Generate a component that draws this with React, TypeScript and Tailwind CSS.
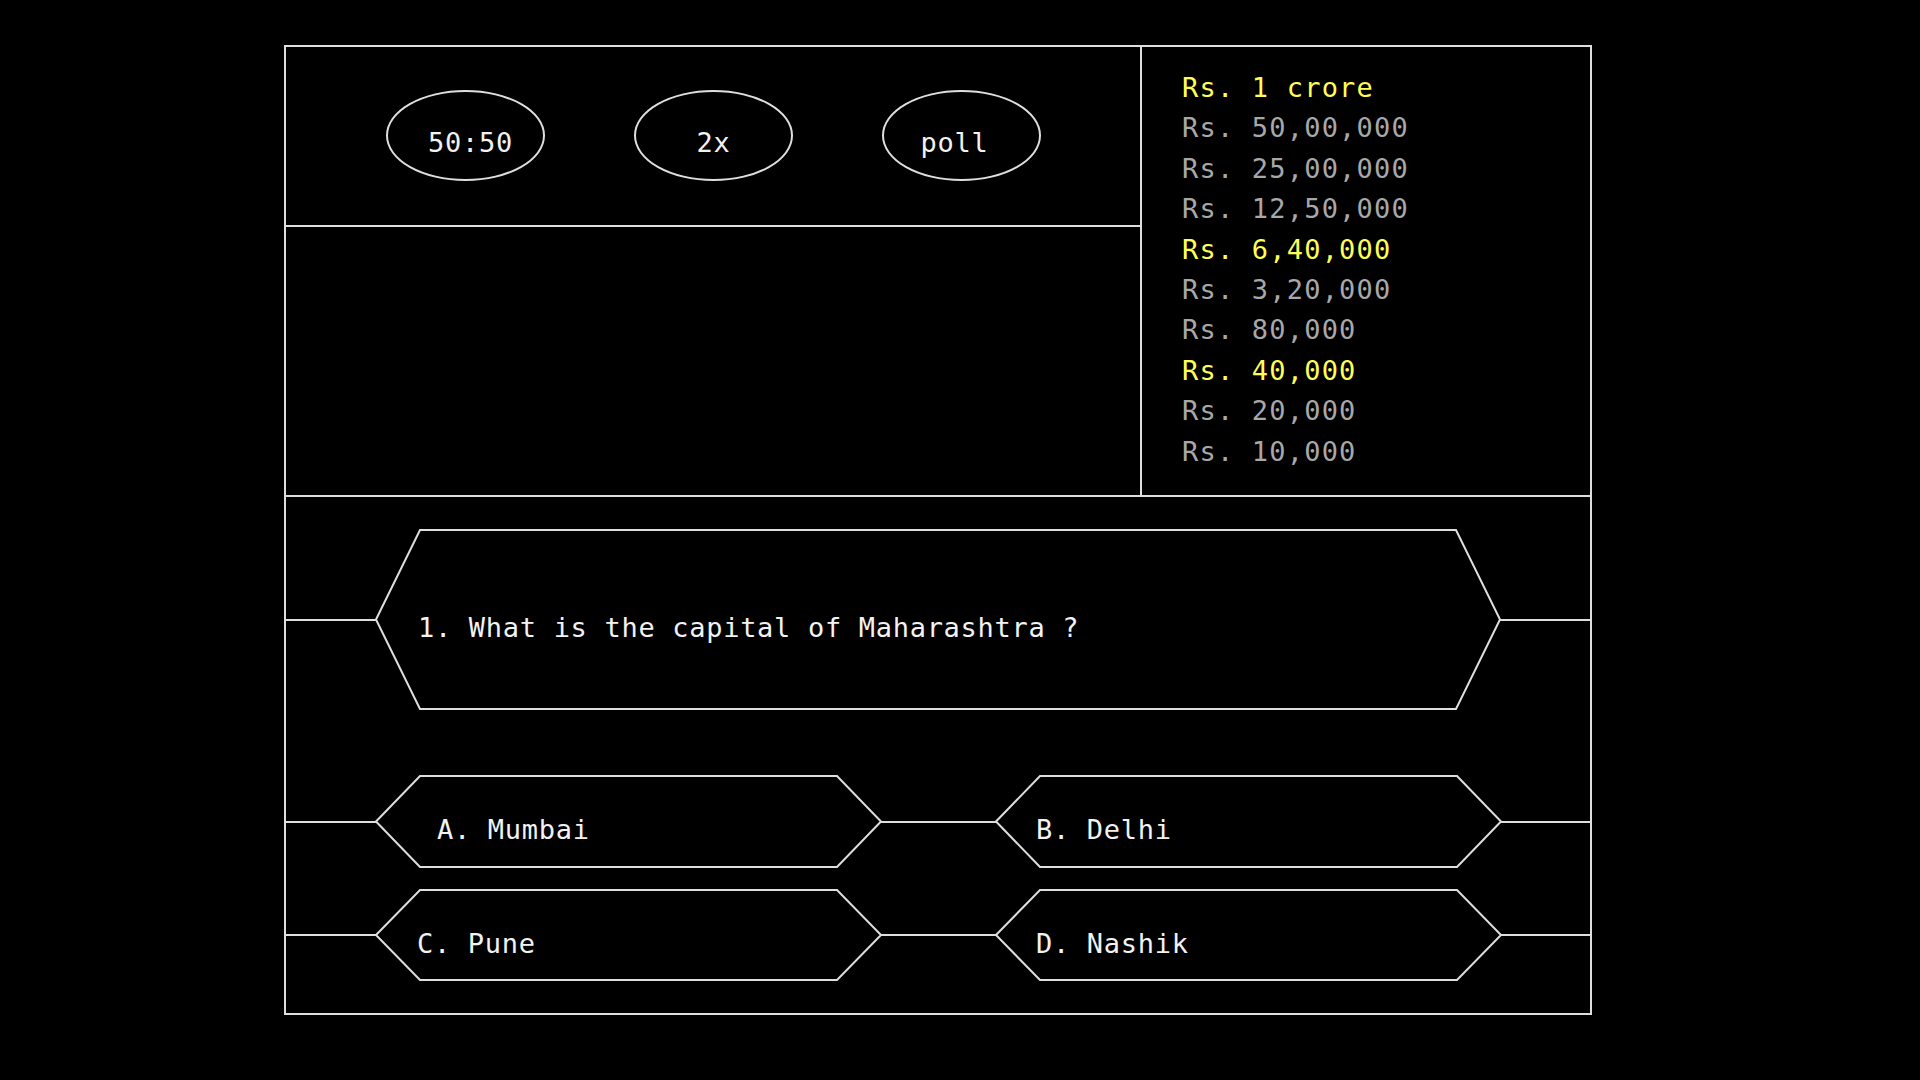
import type { ReactNode } from "react";

const prizes = [
  { label: "Rs. 1 crore", safe: true },
  { label: "Rs. 50,00,000", safe: false },
  { label: "Rs. 25,00,000", safe: false },
  { label: "Rs. 12,50,000", safe: false },
  { label: "Rs. 6,40,000", safe: true },
  { label: "Rs. 3,20,000", safe: false },
  { label: "Rs. 80,000", safe: false },
  { label: "Rs. 40,000", safe: true },
  { label: "Rs. 20,000", safe: false },
  { label: "Rs. 10,000", safe: false },
];

const font = { fontFamily: '"DejaVu Sans Mono", "Liberation Mono", monospace' };

function Hexagon({
  w,
  h,
  children,
  className,
}: {
  w: number;
  h: number;
  children: ReactNode;
  className: string;
}) {
  const inset = 44;
  const points = `0,${h / 2} ${inset},1 ${w - inset},1 ${w},${h / 2} ${w - inset},${h - 1} ${inset},${h - 1}`;
  return (
    <div className="relative shrink-0 h-full" style={{ width: w }}>
      <svg
        className="absolute inset-0 w-full h-full overflow-visible"
        viewBox={`0 0 ${w} ${h}`}
      >
        <polygon points={points} fill="none" stroke="#dedede" strokeWidth={2} />
      </svg>
      <div className={`relative flex items-center h-full text-[27px] leading-[27px] tracking-[0.7px] text-[#f2f2f2] whitespace-pre ${className}`}>
        {children}
      </div>
    </div>
  );
}

function Line({ w }: { w?: string }) {
  return <div className={`h-[2px] bg-[#dedede] ${w ?? "flex-1"}`} />;
}

export default function App() {
  return (
    <div className="min-h-screen w-full bg-black overflow-hidden" style={font}>
      <div className="ml-[284px] pt-[45px]">
        <div className="w-[1308px] h-[970px] border-2 border-[#dedede] flex flex-col">
          {/* top: lifelines + prize ladder */}
          <div className="flex h-[450px] border-b-2 border-[#dedede] shrink-0">
            <div className="w-[856px] border-r-2 border-[#dedede] flex flex-col">
              <div className="h-[180px] border-b-2 border-[#dedede] flex gap-[89px] pl-[100px] pt-[43px]">
                {[
                  { t: "50:50", pad: "pl-[10px]" },
                  { t: "2x", pad: "" },
                  { t: "poll", pad: "pr-[14px]" },
                ].map((l) => (
                  <div
                    key={l.t}
                    className={`w-[159px] h-[91px] border-2 border-[#dedede] rounded-[50%] flex items-center justify-center pt-[14px] text-[27px] leading-[27px] tracking-[0.7px] text-[#f2f2f2] ${l.pad}`}
                  >
                    {l.t}
                  </div>
                ))}
              </div>
              <div className="flex-1" />
            </div>
            <div className="flex-1 pl-[40px] pt-[21px]">
              {prizes.map((p) => (
                <div
                  key={p.label}
                  className={`text-[27px] leading-[40.4px] tracking-[1.2px] whitespace-pre ${p.safe ? "text-[#ffff55]" : "text-[#a8a8a8]"}`}
                >
                  {p.label}
                </div>
              ))}
            </div>
          </div>

          {/* bottom: question + answers */}
          <div className="flex flex-col pt-[32px]">
            <div className="flex items-center h-[181px]">
              <Line w="w-[90px]" />
              <Hexagon w={1124} h={181} className="pl-[42px] pt-[15px]">
                1. What is the capital of Maharashtra ?
              </Hexagon>
              <Line />
            </div>

            <div className="flex items-center h-[93px] mt-[65px]">
              <Line w="w-[90px]" />
              <Hexagon w={505} h={93} className="pl-[61px] pt-[16px]">
                A. Mumbai
              </Hexagon>
              <Line w="w-[115px]" />
              <Hexagon w={505} h={93} className="pl-[40px] pt-[16px]">
                B. Delhi
              </Hexagon>
              <Line />
            </div>

            <div className="flex items-center h-[92px] mt-[21px]">
              <Line w="w-[90px]" />
              <Hexagon w={505} h={92} className="pl-[41px] pt-[16px]">
                C. Pune
              </Hexagon>
              <Line w="w-[115px]" />
              <Hexagon w={505} h={92} className="pl-[40px] pt-[16px]">
                D. Nashik
              </Hexagon>
              <Line />
            </div>
          </div>
        </div>
      </div>
    </div>
  );
}
